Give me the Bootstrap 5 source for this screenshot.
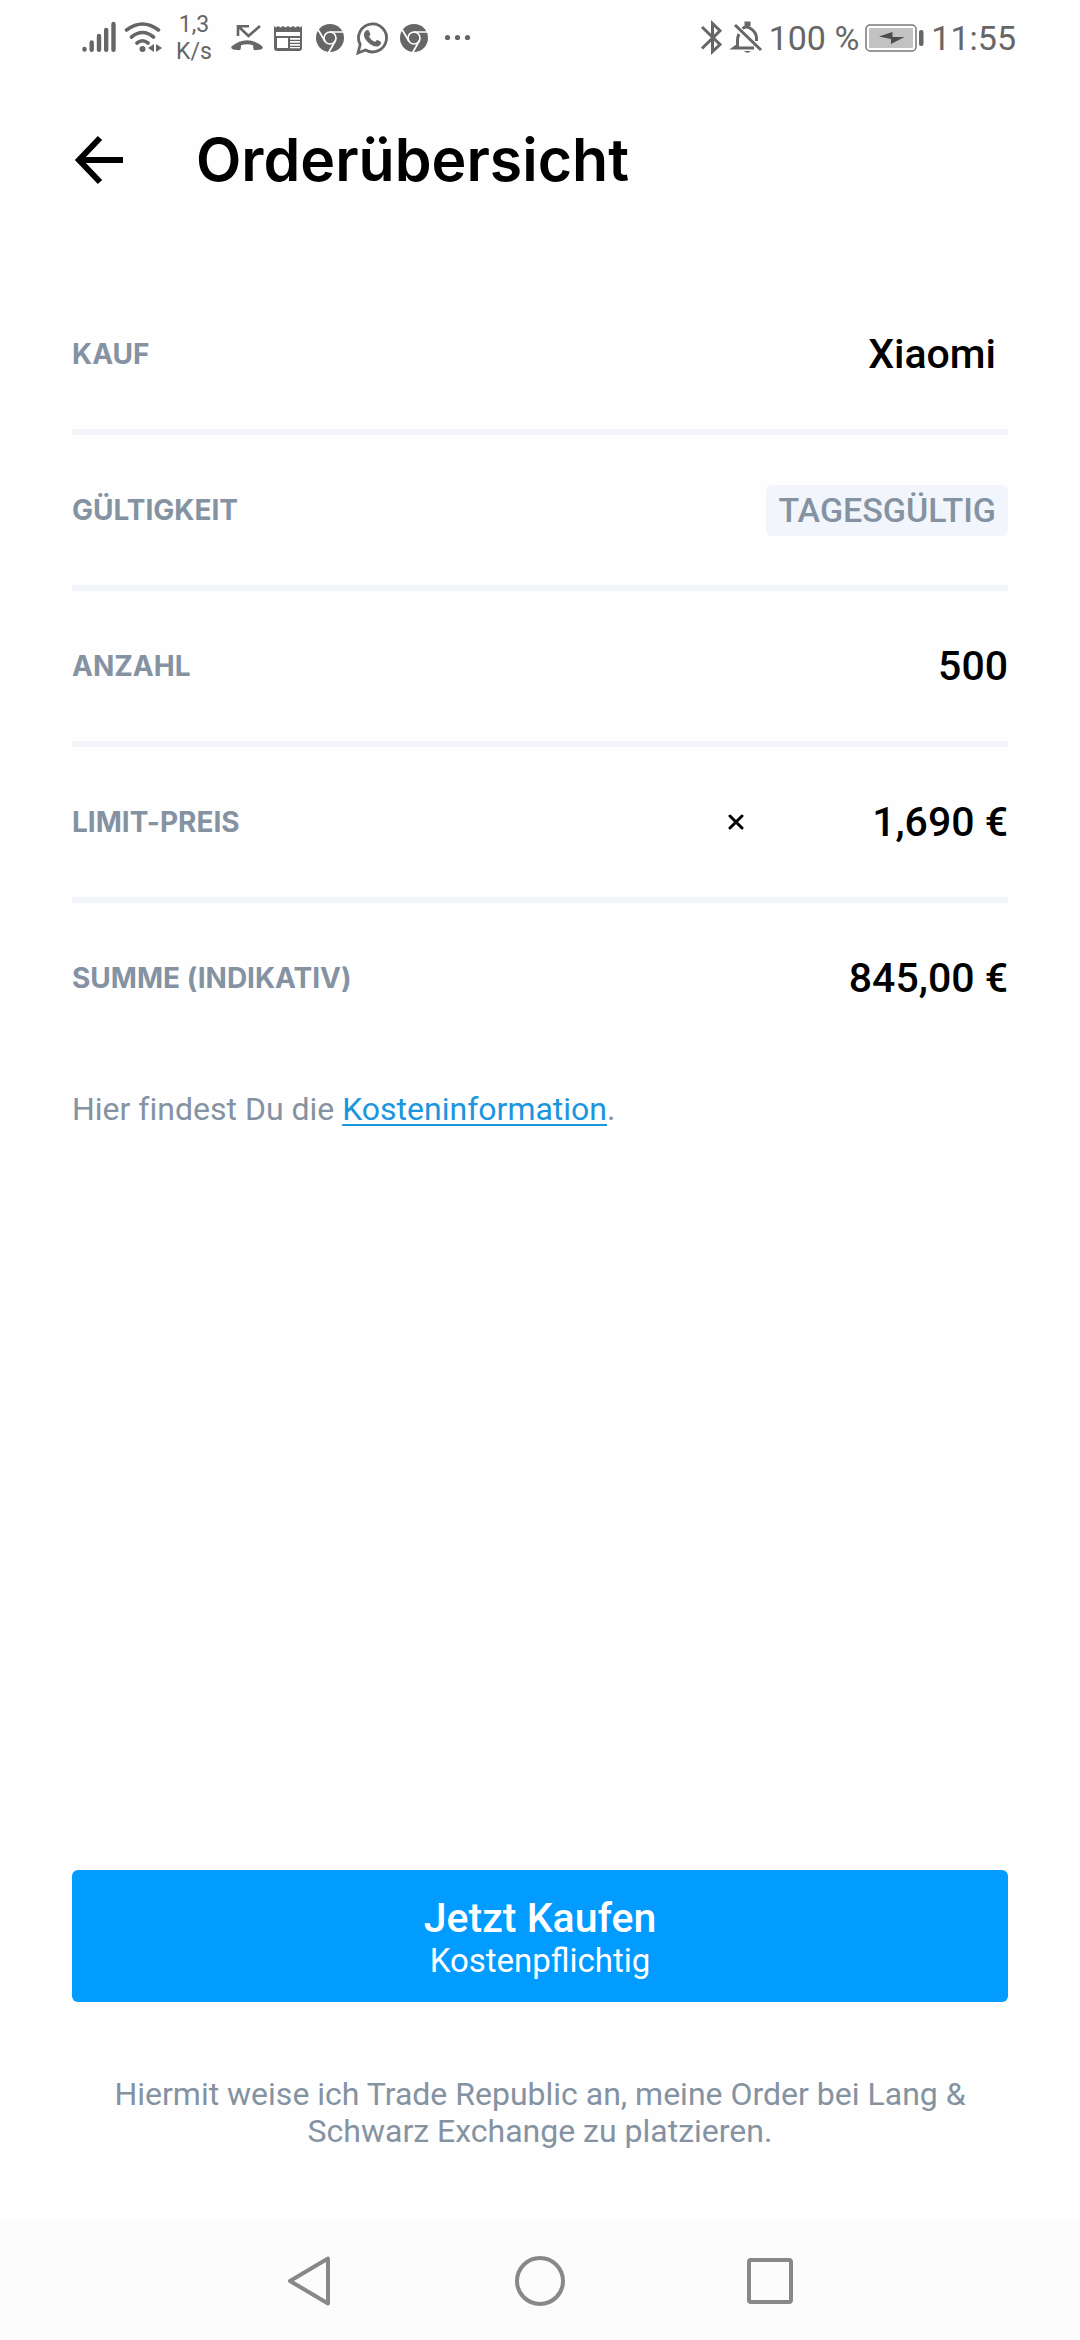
<!DOCTYPE html>
<html lang="de">
<head>
<meta charset="utf-8">
<meta name="viewport" content="width=device-width, initial-scale=1">
<title>Orderübersicht</title>
<link href="https://cdn.jsdelivr.net/npm/bootstrap@5.3.0/dist/css/bootstrap.min.css" rel="stylesheet">
<style>
  body { font-family: Roboto, "Liberation Sans", sans-serif; font-variant-ligatures: none; background: #fefefe; color: #000; font-size: 32px; line-height: 37px; }
  .status-bar { height: 76px; padding: 0 64px 0 78px; color: #666; font-size: 34px; line-height: 40px; }
  .status-icon { width: 42px; height: 42px; flex: none; }
  .status-end { gap: 6px; }
  .net-speed { width: 64px; font-size: 23px; line-height: 27px; text-align: center; }
  .page-pad { padding-left: 72px; padding-right: 72px; }
  .top-bar { height: 168px; gap: 68px; }
  .page-title { font-family: Inter, Roboto, sans-serif; font-size: 59px; line-height: 64px; font-weight: 600; }
  .order-list { padding-top: 35px; }
  .order-row { min-height: 156px; border-bottom: 6px solid #f2f6fa; }
  .order-row:last-child { border-bottom-color: transparent; }
  .order-key { font-family: Inter, Roboto, sans-serif; font-size: 28px; font-weight: 700; color: #8492a2; }
  .order-value { font-size: 41px; line-height: 48px; font-weight: 500; }
  .order-name { padding-right: 12px; }
  .times { width: 16px; height: 16px; margin-right: 128px; }
  .validity { background: #f2f6fc; color: #8492a2; border-radius: 6px; font-size: 34px; font-weight: 500; padding: 7px 12px; }
  .muted-text { color: #8492a2; }
  .cost-note { padding-top: 32px; }
  .cost-link { color: #1a95de; text-underline-offset: 4px; text-decoration-thickness: 2px; }
  .buy-btn { background: #029bff; color: #fff; border-radius: 6px; min-height: 132px; padding: 0; }
  .buy-title { font-size: 41px; line-height: 48px; font-weight: 500; }
  .buy-sub { font-size: 33px; line-height: 37px; }
  .legal { padding: 74px 24px 72px; }
  .nav-keys { height: 118px; background: #fcfcfc; gap: 180px; }
  .nav-key { width: 50px; height: 50px; }
</style>
</head>
<body>
<div class="d-flex flex-column min-vh-100">
  <div class="status-bar d-flex align-items-center justify-content-between">
    <div class="d-flex align-items-center">
      <svg class="status-icon" viewBox="0 0 42 42" stroke="#666" stroke-width="4.4" stroke-linecap="round"><path d="M6.500 32v.6M13.700 25.500v7.200M21 19v13.700M28.200 13v19.700M35.500 7v25.700"/></svg>
      <svg class="status-icon" viewBox="0 0 42 42" fill="none" stroke="#666" stroke-width="3.600" stroke-linecap="round"><path d="M6.500 13q16-12 32 0M11.500 20q11-9 22 0M17 26q5.500-4.500 11 0"/><circle cx="22.500" cy="32" r="3" fill="#666" stroke="none"/><path d="M34 27v8l-6-4zM36 27v8l6-4z" fill="#666" stroke="none"/></svg>
      <div class="net-speed">1,3<br>K/s</div>
      <svg class="status-icon" viewBox="0 0 42 42" fill="none" stroke="#666" stroke-width="2.600"><path d="M34 9L22.500 19 12.500 9.500M12 19V9.200h11"/><path d="M5.500 29.500q15.500-12.500 31 0 1 2-1.500 3l-6 .8q-1.500 0-1.700-2l-.2-3q-6-2-12 0l-.3 3q-.2 2-1.700 2l-6-.8q-2.600-1-1.600-3z" fill="#666" stroke="none"/></svg>
      <svg class="status-icon" viewBox="0 0 42 42"><path fill="#666" d="M6 9l2 1.500L10 9l2.500 1.500L15 9l2.500 1.500L20 9l2.500 1.500L25 9l2.500 1.500L30 9l2 1.500L34 9v22q0 3-3 3H9q-3 0-3-3z"/><path fill="#fff" d="M8 15h24v4H8zM9 21h11v10H9zM22 21h10v1.700H22zM22 24h10v1.700H22zM22 27h10v1.700H22zM22 30h10v1.200H22z"/></svg>
      <svg class="status-icon" viewBox="0 0 42 42"><circle cx="20" cy="21" r="14" fill="#666"/><g fill="none" stroke="#fff" stroke-width="1.700"><circle cx="20" cy="21" r="6"/><path d="M20 15h13M14.800 24L8 12.500M25.200 24l-6.500 11.500"/></g></svg>
      <svg class="status-icon" viewBox="0 0 42 42"><path d="M6 36l2.200-8.500a14 14 0 1 1 5.300 5.500z" fill="none" stroke="#666" stroke-width="2.800"/><path fill="#666" d="M14 13.500q2-1.200 3 .4l1.300 3q.2 1-1.300 2.600 2 4 6 5.600 1.700-2.300 2.500-2l3.400 1.700q.7 3.400-3 4.600-3 1-8-2.500-5.500-4.500-6-8.400 0-3.200 2.100-5z"/></svg>
      <svg class="status-icon" viewBox="0 0 42 42"><circle cx="20" cy="21" r="14" fill="#666"/><g fill="none" stroke="#fff" stroke-width="1.700"><circle cx="20" cy="21" r="6"/><path d="M20 15h13M14.800 24L8 12.500M25.200 24l-6.500 11.500"/></g></svg>
      <svg class="status-icon" viewBox="0 0 42 42" fill="#666"><circle cx="11.500" cy="20.500" r="2.600"/><circle cx="21.500" cy="20.500" r="2.600"/><circle cx="31.500" cy="20.500" r="2.600"/></svg>
    </div>
    <div class="status-end d-flex align-items-center">
      <svg width="64" height="42" viewBox="0 0 64 42" fill="none" stroke="#666" stroke-width="3"><path d="M3 10l18 17.500-7.500 7V6.500l7.500 7.200L3 31.500"/><path d="M36 8l26 25"/><path d="M43.500 11.500q4-3 8 0 6 3.500 6 10v2.500M40 17q-1.500 3-1.500 6.500v5l-3.500 2.500h20" /><path d="M47.500 9V6.500h2V9" stroke-width="4"/><path d="M45 34h7q-3.500 3.600-7 0z" fill="#666" stroke="none"/></svg>
      <span>100 %</span>
      <svg width="60" height="42" viewBox="0 0 60 42"><rect x="1" y="8" width="50" height="26" rx="4" fill="#fff" stroke="#777" stroke-width="1.500"/><rect x="4" y="11" width="44" height="20" rx="1" fill="#c2c2c2"/><path fill="#4d4d4d" d="M14 19.500l13.500-4.500v5h12L26 27v-5z"/><rect x="54" y="13" width="4.500" height="16" rx="2" fill="#666"/></svg>
      <span>11:55</span>
    </div>
  </div>

  <header class="top-bar page-pad d-flex align-items-center">
    <a href="#" aria-label="Zurück" class="d-flex"><svg width="56" height="50" viewBox="0 0 56 50" fill="none" stroke="#000" stroke-width="6"><path d="M51 25H8M28 3L7 25l21 22"/></svg></a>
    <h1 class="page-title m-0">Orderübersicht</h1>
  </header>

  <main class="page-pad flex-grow-1 d-flex flex-column">
    <dl class="m-0 order-list">
      <div class="order-row d-flex align-items-center justify-content-between"><dt class="order-key">KAUF</dt><dd class="order-value order-name m-0">Xiaomi</dd></div>
      <div class="order-row d-flex align-items-center justify-content-between"><dt class="order-key">GÜLTIGKEIT</dt><dd class="validity m-0">TAGESGÜLTIG</dd></div>
      <div class="order-row d-flex align-items-center justify-content-between"><dt class="order-key">ANZAHL</dt><dd class="order-value m-0">500</dd></div>
      <div class="order-row d-flex align-items-center justify-content-between"><dt class="order-key">LIMIT-PREIS</dt><dd class="order-value m-0 d-flex align-items-center"><svg class="times" viewBox="0 0 16 16" stroke="#000" stroke-width="3" stroke-linecap="round"><path d="M2 2l12 12M14 2L2 14"/></svg>1,690 €</dd></div>
      <div class="order-row d-flex align-items-center justify-content-between"><dt class="order-key">SUMME (INDIKATIV)</dt><dd class="order-value m-0">845,00 €</dd></div>
    </dl>
    <p class="cost-note muted-text m-0">Hier findest Du die <a href="#" class="cost-link">Kosteninformation</a>.</p>
    <div class="mt-auto">
      <button type="button" class="btn buy-btn w-100 d-flex flex-column align-items-center justify-content-center">
        <span class="buy-title">Jetzt Kaufen</span>
        <span class="buy-sub">Kostenpflichtig</span>
      </button>
      <p class="legal muted-text text-center m-0">Hiermit weise ich Trade Republic an, meine Order bei Lang &amp; Schwarz Exchange zu platzieren.</p>
    </div>
  </main>

  <nav class="nav-keys d-flex align-items-center justify-content-center" aria-label="System">
    <svg class="nav-key" viewBox="0 0 50 50" fill="none" stroke="#888" stroke-width="4" stroke-linejoin="round"><path d="M43 2.500v45L5 25z"/></svg>
    <svg class="nav-key" viewBox="0 0 50 50" fill="none" stroke="#888" stroke-width="4"><circle cx="25" cy="25" r="23"/></svg>
    <svg class="nav-key" viewBox="0 0 50 50" fill="none" stroke="#888" stroke-width="4"><rect x="4" y="4" width="42" height="42" rx="2"/></svg>
  </nav>
</div>
<script src="https://cdn.jsdelivr.net/npm/bootstrap@5.3.0/dist/js/bootstrap.bundle.min.js"></script>
</body>
</html>
